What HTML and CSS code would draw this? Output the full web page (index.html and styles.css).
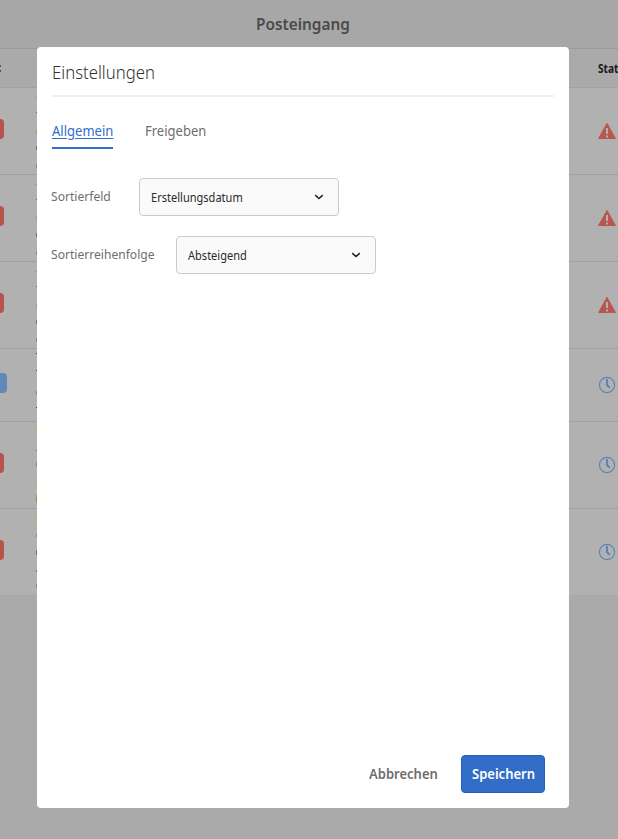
FILE: index.html
```html
<!DOCTYPE html>
<html lang="de">
<head>
<meta charset="utf-8">
<title>Posteingang</title>
<link rel="stylesheet" href="styles.css">
</head>
<body>
<svg class="defs" width="0" height="0">
  <symbol id="alert" viewBox="0 0 18 16"><path fill-rule="evenodd" d="M8.4.4a.7.7 0 0 1 1.2 0l8.2 14.8c.2.4 0 .8-.5.8H.7c-.5 0-.7-.4-.5-.8zM8 5v6h2V5zm0 7.5v2h2v-2z"/></symbol>
  <symbol id="clock" viewBox="0 0 18 18"><circle cx="9" cy="9" r="7.6" fill="none" stroke="currentColor" stroke-width="1.1"/><path d="M9 3v6.2l3 2.6" fill="none" stroke="currentColor" stroke-width="1.9"/></symbol>
</svg>
<div class="app">
  <header class="topbar"><span>Posteingang</span></header>
  <div class="row head"><i class="link-end"></i><b><span>Status</span></b></div>
  <div class="row"><i class="tag"></i><i class="sliver a"></i><svg class="alert"><use href="#alert"/></svg></div>
  <div class="row"><i class="tag"></i><i class="sliver a"></i><svg class="alert"><use href="#alert"/></svg></div>
  <div class="row"><i class="tag"></i><i class="sliver a"></i><svg class="alert"><use href="#alert"/></svg></div>
  <div class="row short"><i class="tag blue"></i><i class="sliver b"></i><svg class="clock"><use href="#clock"/></svg></div>
  <div class="row"><i class="tag"></i><i class="sliver c"></i><svg class="clock"><use href="#clock"/></svg></div>
  <div class="row last"><i class="tag"></i><i class="sliver d"></i><svg class="clock"><use href="#clock"/></svg></div>
</div>
<section class="dialog" role="dialog">
  <h1><span>Einstellungen</span></h1>
  <nav><a class="active"><span>Allgemein</span></a><a class="share"><span>Freigeben</span></a></nav>
  <div class="field"><label class="l1"><span>Sortierfeld</span></label><div class="select"><span>Erstellungsdatum</span><svg viewBox="0 0 10 6"><path d="M1.2 1.2 5 4.5l3.8-3.3"/></svg></div></div>
  <div class="field"><label class="l2"><span>Sortierreihenfolge</span></label><div class="select"><span>Absteigend</span><svg viewBox="0 0 10 6"><path d="M1.2 1.2 5 4.5l3.8-3.3"/></svg></div></div>
  <footer><button class="cancel"><span>Abbrechen</span></button><button class="save"><span>Speichern</span></button></footer>
</section>
</body>
</html>
```
FILE: styles.css
```css
* { box-sizing: border-box; }
body { margin: 0; height: 839px; overflow: hidden; position: relative; background: #aaa; font-family: "Noto Sans", "Open Sans", sans-serif; }
.defs { position: absolute; }
span { display: inline-block; white-space: nowrap; transform: scaleX(.93); transform-origin: left; }
.topbar { height: 49px; background: #a7a7a7; border-bottom: 1px solid #9b9b9b; display: flex; justify-content: center; align-items: center; padding-right: 12px; font-size: 16px; font-weight: 600; color: #4a4a4a; }
.topbar span { transform: scaleX(.96); transform-origin: center; }
.row { height: 87px; display: grid; grid-template-columns: 36px 1fr 20px; align-items: center; background: #b1b1b1; border-bottom: 1px solid #a0a0a0; overflow: hidden; }
.head { height: 39px; background: #aaa; font-size: 12px; color: #191919; }
.head b { grid-column: 3; }
.head span { transform: scaleX(.84); }
.link-end { width: 1px; height: 7px; border: solid #28608f; border-width: 2px 0; }
.short { height: 73px; }
.last { height: 86px; border: 0; }
.tag { width: 4px; height: 20px; margin-bottom: 5px; background: #b9524b; border-radius: 0 4px 4px 0; }
.tag.blue { width: 7px; background: #6088ba; }
.sliver { width: 1px; height: 100%; }
.a { background: linear-gradient(#ad7b45 0 0) 0 9px/1px 1px no-repeat, linear-gradient(#8a5a20 0 0) 0 24px/1px 1px no-repeat, linear-gradient(#bd9850 0 0) 0 41px/1px 5px no-repeat, linear-gradient(#a56a2b 0 0) 0 58px/1px 4px no-repeat, linear-gradient(#b78334 0 0) 0 76px/1px 4px no-repeat; }
.b { background: linear-gradient(#792d20 0 0) 0 4px/1px 1px no-repeat, linear-gradient(#792d20 0 0) 0 21px/1px 1px no-repeat, linear-gradient(#b78334 0 0) 0 42px/1px 4px no-repeat, linear-gradient(#792d20 0 0) 0 58px/1px 1px no-repeat; }
.c { background: linear-gradient(#b9ad68 0 0) 0 4px/1px 9px no-repeat, linear-gradient(#9b592c 0 0) 0 28px/1px 1px no-repeat, linear-gradient(#b78334 0 0) 0 40px/1px 5px no-repeat, linear-gradient(#b9ad68 0 0) 0 56px/1px 8px no-repeat, linear-gradient(#b18b48 0 0) 0 73px/1px 8px no-repeat; }
.d { background: linear-gradient(#b9ad68 0 0) 0 4px/1px 9px no-repeat, linear-gradient(#b78334 0 0) 0 25px/1px 3px no-repeat, linear-gradient(#a5622b 0 0) 0 41px/1px 5px no-repeat, linear-gradient(#a5622b 0 0) 0 61px/1px 2px no-repeat, linear-gradient(#b78334 0 0) 0 75px/1px 4px no-repeat; }
.alert { grid-column: 3; width: 18px; height: 16px; fill: #b85750; }
.clock { grid-column: 3; width: 18px; height: 18px; color: #5b82b6; }
.dialog { position: absolute; left: 37px; top: 47px; width: 532px; height: 761px; background: #fff; border-radius: 4px; padding: 0 14px; display: flex; flex-direction: column; color: #6e6e6e; font-size: 13px; }
h1 { margin: 0 1px; height: 50px; border-bottom: 2px solid #f0f0f0; font-size: 18px; line-height: 51px; font-weight: 300; color: #323232; }
nav { display: flex; gap: 32px; margin: 21px 1px 0; height: 31px; line-height: 25px; font-size: 14px; }
nav a { width: 61px; }
.active { color: #326ec8; border-bottom: 2px solid #326ec8; }
.active span { text-decoration: underline; text-underline-offset: 2px; }
.field { display: flex; margin-top: 29px; height: 38px; line-height: 36px; }
.field + .field { margin-top: 20px; }
.l1 { width: 88px; }
.l2 { width: 125px; }
.select { width: 200px; background: #fafafa; border: 1px solid #cacaca; border-radius: 4px; padding: 0 14px 0 10.5px; display: flex; align-items: center; justify-content: space-between; font-size: 12px; color: #2a2a2a; }
.select span { padding-top: 2px; transform: scaleX(.92); }
.select svg { width: 10px; height: 6px; fill: none; stroke: #252525; stroke-width: 1.6; }
footer { margin-top: auto; display: flex; justify-content: flex-end; padding: 0 10px 15px; gap: 12px; }
button { font: 600 14px/36px "Noto Sans", sans-serif; height: 38px; padding: 0 10px; border: 1px solid transparent; border-radius: 4px; background: none; color: #6e6e6e; text-align: left; }
.cancel { width: 91px; }
.save { width: 84px; background: #326ec8; border-color: #2460b8; color: #fff; }
```
